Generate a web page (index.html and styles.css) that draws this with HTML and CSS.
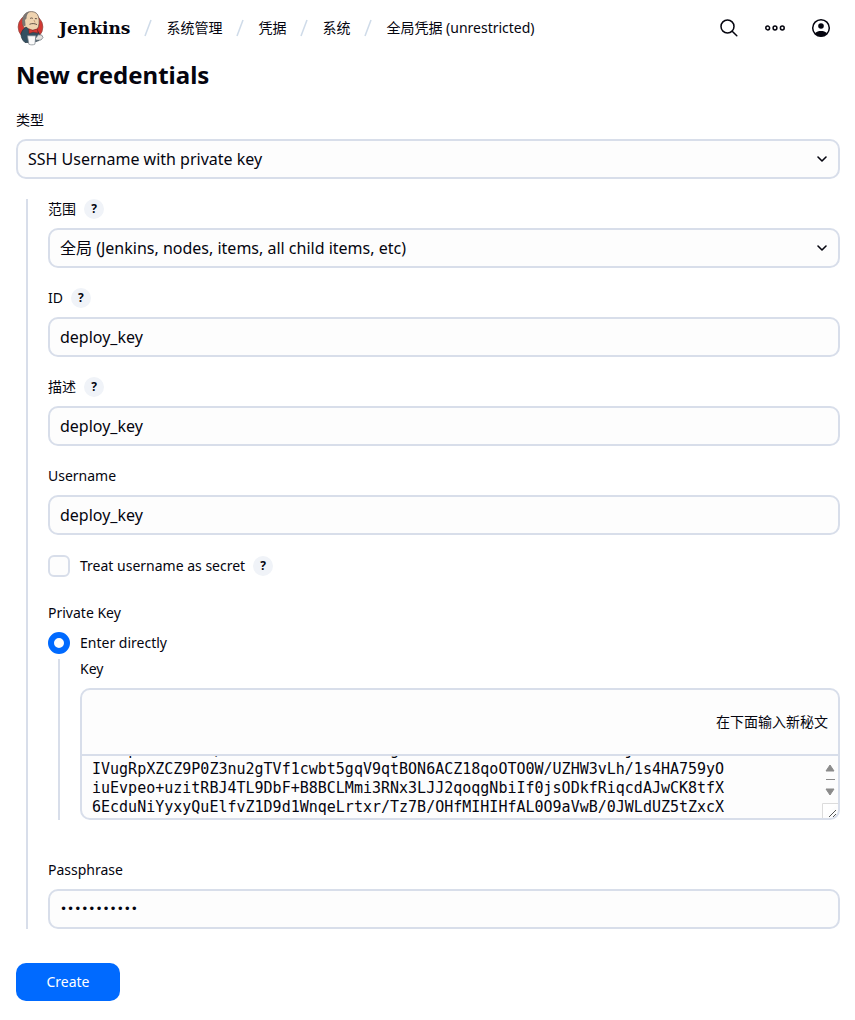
FILE: index.html
```html
<!DOCTYPE html>
<html lang="zh-CN">
<head>
<meta charset="utf-8">
<meta name="viewport" content="width=device-width, initial-scale=1">
<title>New credentials - Jenkins</title>
<link rel="stylesheet" href="styles.css">
</head>
<body>
<header class="header">
  <a class="brand" href="#">
    <svg class="brand-logo" viewBox="0 0 28 36" aria-hidden="true">
      <circle cx="13.500" cy="17" r="12.400" fill="#d33833" stroke="#8e4a44" stroke-width=".7"/>
      <path d="M6.500 17C4.800 12 5.200 6.500 8.500 3.600 11.500 1 17.500.7 20.300 4.200c2.200 3 2.300 8.500 1.200 12.300-.8 2.800-3 4-5 4.200L10 20z" fill="#efd3b0" stroke="#5c4d47" stroke-width=".7"/>
      <path d="M6.500 16.500C4.800 12 5.200 6.500 8.500 3.600c1.200-1.100 2.800-1.900 4.300-2-2.300 1.900-3.300 4-3.300 6.800L8 10l.6 5.500z" fill="#7b7673"/>
      <path d="M13 8.700c.9-.9 2-.9 2.900-.1M17.900 8.600l2 .1M12.500 14.300c2.300-1 5-1 7.500.3" fill="none" stroke="#54443c" stroke-width=".9"/>
      <path d="M17 10l1 2.500" fill="none" stroke="#b48e6c" stroke-width=".8"/>
      <path d="M4 24c.8-3 2.800-5.800 5-7l4.500 3.500 6.500-.5 3.500 6-1.500 4.500-6 2H8C5.500 30.500 4 27.500 4 24z" fill="#335061" stroke="#22343f" stroke-width=".7"/>
      <path d="M11.800 18.800l4 1.500 4.600-1.500.5 4.300-4.800-1-4 1.500z" fill="#d33833" stroke="#7e1f1d" stroke-width=".5"/>
      <path d="M10.500 25.800h8.300l-.9 8.400c-1.900.9-4.200.9-6.100 0z" fill="#fafafa" stroke="#7a838a" stroke-width=".7"/>
      <path d="M18.500 28.500l2.700-3.700 3.500.2 1.300 2.500-2 2.500-4.800.3z" fill="#e4e1df" stroke="#667078" stroke-width=".7"/>
    </svg>
    <span class="brand-name">Jenkins</span>
  </a>
  <nav class="crumbs" aria-label="Breadcrumb">
    <svg class="slash" viewBox="0 0 8 18" aria-hidden="true"><path d="M7 1 1 17"/></svg>
    <a href="#">系统管理</a>
    <svg class="slash" viewBox="0 0 8 18" aria-hidden="true"><path d="M7 1 1 17"/></svg>
    <a href="#">凭据</a>
    <svg class="slash" viewBox="0 0 8 18" aria-hidden="true"><path d="M7 1 1 17"/></svg>
    <a href="#">系统</a>
    <svg class="slash" viewBox="0 0 8 18" aria-hidden="true"><path d="M7 1 1 17"/></svg>
    <a href="#">全局凭据 (unrestricted)</a>
  </nav>
  <div class="actions">
    <button class="icon-button" type="button" aria-label="Search">
      <svg viewBox="0 0 20 20" aria-hidden="true"><circle cx="8.500" cy="8.500" r="6.500"/><path d="m13.200 13.200 4.600 4.600"/></svg>
    </button>
    <button class="icon-button" type="button" aria-label="More">
      <svg viewBox="0 0 20 20" aria-hidden="true"><circle cx="2.700" cy="10" r="1.900"/><circle cx="10" cy="10" r="1.900"/><circle cx="17.300" cy="10" r="1.900"/></svg>
    </button>
    <button class="icon-button" type="button" aria-label="Account">
      <svg viewBox="0 0 20 20" aria-hidden="true"><circle cx="10" cy="10" r="8.300"/><circle class="solid" cx="10" cy="8" r="2.800"/><path class="solid" d="M4 15.200c1.500-1.600 3.700-2.200 6-2.200s4.500.6 6 2.200c-1.500 2-3.700 3.100-6 3.100s-4.500-1.100-6-3.100z"/></svg>
    </button>
  </div>
</header>

<main class="page">
  <h1 class="title">New credentials</h1>
  <form class="form">
    <div class="field">
      <div class="label-row"><label for="kind">类型</label></div>
      <div class="select">
        <select class="control" id="kind"><option>SSH Username with private key</option></select>
        <svg class="chevron" viewBox="0 0 12 8" aria-hidden="true"><path d="m2 2 4 4 4-4"/></svg>
      </div>
    </div>

    <div class="group">
      <div class="field">
        <div class="label-row"><label for="scope">范围</label><button class="help" type="button" aria-label="Help: 范围">?</button></div>
        <div class="select">
          <select class="control" id="scope"><option>全局 (Jenkins, nodes, items, all child items, etc)</option></select>
          <svg class="chevron" viewBox="0 0 12 8" aria-hidden="true"><path d="m2 2 4 4 4-4"/></svg>
        </div>
      </div>
      <div class="field">
        <div class="label-row"><label for="id">ID</label><button class="help" type="button" aria-label="Help: ID">?</button></div>
        <input class="control" id="id" type="text" value="deploy_key">
      </div>
      <div class="field">
        <div class="label-row"><label for="description">描述</label><button class="help" type="button" aria-label="Help: 描述">?</button></div>
        <input class="control" id="description" type="text" value="deploy_key">
      </div>
      <div class="field">
        <div class="label-row"><label for="username">Username</label></div>
        <input class="control" id="username" type="text" value="deploy_key">
      </div>
      <div class="choice">
        <input class="checkbox" id="secret" type="checkbox">
        <label for="secret">Treat username as secret</label>
        <button class="help" type="button" aria-label="Help: Treat username as secret">?</button>
      </div>

      <fieldset class="private-key">
        <legend class="legend">Private Key</legend>
        <div class="choice">
          <input class="radio" id="direct" type="radio" name="source" checked>
          <label for="direct">Enter directly</label>
        </div>
        <div class="nested">
          <div class="label-row"><label for="key">Key</label></div>
          <div class="secret-box">
            <div class="secret-hint">在下面输入新秘文</div>
            <div class="secret-entry">
              <textarea class="secret-text" id="key" rows="3" spellcheck="false">    p        Q                   g                         j
IVugRpXZCZ9P0Z3nu2gTVf1cwbt5gqV9qtBON6ACZ18qoOTO0W/UZHW3vLh/1s4HA759yO
iuEvpeo+uzitRBJ4TL9DbF+B8BCLMmi3RNx3LJJ2qoqgNbiIf0jsODkfRiqcdAJwCK8tfX
6EcduNiYyxyQuElfvZ1D9d1WnqeLrtxr/Tz7B/OHfMIHIHfAL0O9aVwB/0JWLdUZ5tZxcX</textarea>
              <svg class="scroller" viewBox="0 0 16 62" aria-hidden="true">
                <path class="arrow" d="M8 9 12 15H4zM4 33h8L8 39z"/>
                <path class="thumb" d="M4 23.500h9"/>
                <path class="corner" d="M.5 62V47.500H16"/>
                <path class="grip" d="m7 61 7-7M11 61l3-3"/>
              </svg>
            </div>
          </div>
        </div>
      </fieldset>

      <div class="field">
        <div class="label-row"><label for="passphrase">Passphrase</label></div>
        <input class="control masked" id="passphrase" type="password" value="passphrase1">
      </div>
    </div>

    <button class="submit" type="button">Create</button>
  </form>
</main>
<script src="script.js"></script>
</body>
</html>
```
FILE: styles.css
```css
:root {
  --text: #05050f;
  --line: #d8deea;
  --field: #fdfdfd;
  --accent: #006aff;
}

* { box-sizing: border-box; }

body {
  margin: 0;
  background: #fff;
  color: var(--text);
  font: 14px/20px "Noto Sans", "Noto Sans CJK SC", sans-serif;
}

button, input, select, textarea { font: inherit; color: inherit; }

.header {
  display: flex;
  align-items: center;
  height: 56px;
  padding: 0 16px 0 17px;
}

.brand {
  display: flex;
  align-items: center;
  gap: 14px;
  color: inherit;
  text-decoration: none;
}

.brand-logo { width: 28px; height: 36px; }

.brand-name {
  font: bold 17px/24px "DejaVu Serif", serif;
}

.crumbs {
  display: flex;
  align-items: center;
  gap: 14px;
  margin-left: 14px;
  white-space: nowrap;
}

.crumbs a { color: inherit; text-decoration: none; }

.slash { width: 8px; height: 18px; }
.slash path { fill: none; stroke: #cfdbe9; stroke-width: 1.6; }

.actions { display: flex; gap: 10px; margin-left: auto; }

.icon-button {
  display: grid;
  place-items: center;
  width: 36px;
  height: 36px;
  padding: 0;
  border: 0;
  background: none;
}

.icon-button svg {
  width: 20px;
  height: 20px;
  fill: none;
  stroke: var(--text);
  stroke-width: 1.5;
  stroke-linecap: round;
}

.icon-button .solid { fill: var(--text); stroke: none; }

.page { padding: 4px 15px 20px 16px; }

.title {
  margin: 0 0 20px;
  font-size: 24px;
  line-height: 30px;
  font-weight: 700;
}

.form { display: flex; flex-direction: column; gap: 20px; }

.group {
  display: flex;
  flex-direction: column;
  gap: 20px;
  margin-left: 10px;
  padding-left: 20px;
  border-left: 2px solid var(--line);
}

.label-row {
  display: flex;
  align-items: center;
  gap: 8px;
  margin-bottom: 9px;
}

.help {
  width: 20px;
  height: 20px;
  padding: 0;
  border: 0;
  border-radius: 50%;
  background: #f0f3f8;
  font-size: 12px;
  line-height: 20px;
  font-weight: 700;
  text-align: center;
}

.control {
  display: block;
  width: 100%;
  height: 40px;
  padding: 0 10px;
  border: 2px solid var(--line);
  border-radius: 10px;
  background: var(--field);
  font-size: 16px;
  appearance: none;
}

.masked { font-family: "DejaVu Sans", sans-serif; font-size: 12px; }

.select { position: relative; }

.chevron {
  position: absolute;
  top: 16px;
  right: 12px;
  width: 12px;
  height: 8px;
  fill: none;
  stroke: var(--text);
  stroke-width: 1.6;
  stroke-linecap: round;
  stroke-linejoin: round;
  pointer-events: none;
}

.choice { display: flex; align-items: center; gap: 10px; height: 22px; }
.choice .help { margin-left: -2px; }

.checkbox, .radio {
  width: 22px;
  height: 22px;
  margin: 0;
  appearance: none;
  background: var(--field);
}

.checkbox { border: 2px solid var(--line); border-radius: 6px; }
.radio { border: 6px solid var(--accent); border-radius: 50%; }

.private-key {
  min-width: 0;
  margin: 6px 0 20px;
  padding: 0;
  border: 0;
}

.legend { margin-bottom: 9px; padding: 0; }

.nested {
  margin: 5px 0 0 10px;
  padding-left: 20px;
  border-left: 2px solid var(--line);
}

.secret-box {
  overflow: hidden;
  border: 2px solid var(--line);
  border-radius: 10px;
  background: var(--field);
}

.secret-hint {
  padding: 22px 10px;
  border-bottom: 2px solid var(--line);
  text-align: right;
}

.secret-entry { position: relative; }

.secret-text {
  display: block;
  width: 100%;
  height: 62px;
  padding: 1px 20px 1px 10px;
  border: 0;
  outline: 0;
  background: none;
  font: 15px/19px "DejaVu Sans Mono", monospace;
  resize: none;
  scrollbar-width: none;
}

.scroller {
  position: absolute;
  top: 0;
  right: 0;
  width: 16px;
  height: 62px;
  pointer-events: none;
}

.arrow { fill: #8b8b8b; stroke: #8b8b8b; stroke-linejoin: round; }
.thumb { stroke: #8b8b8b; }
.corner { fill: #fff; stroke: #dcdcdc; }
.grip { stroke: #555; }

.submit {
  align-self: flex-start;
  min-width: 104px;
  height: 38px;
  margin-top: 14px;
  padding: 0 30px;
  border: 0;
  border-radius: 10px;
  background: var(--accent);
  color: #fff;
}
```
FILE: script.js
```js
const key = document.getElementById("key");
key.scrollTop = key.scrollHeight;
```
